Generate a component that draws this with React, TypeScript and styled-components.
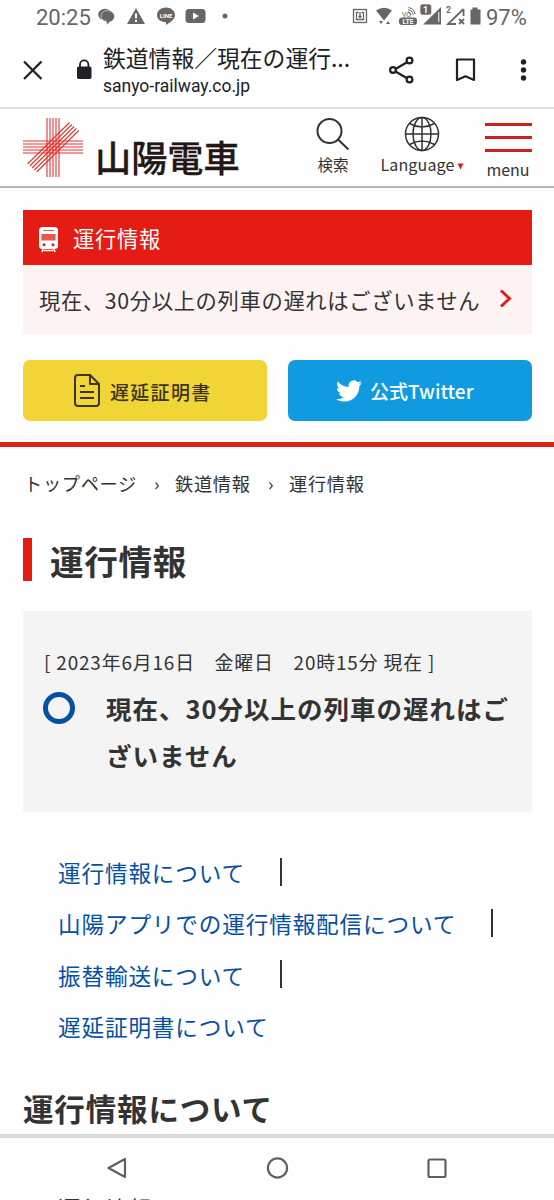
import React from "react";
import styled, { createGlobalStyle } from "styled-components";

const Global = createGlobalStyle`
  * { box-sizing: border-box; }
  body { margin: 0; background: #fefefe; overflow: hidden; }
`;
const jp = `"Noto Sans CJK JP", sans-serif`;

const Screen = styled.div`
  width: 554px; height: 1200px; overflow: hidden; display: flex; flex-direction: column;
  background: #fefefe; color: #333; font-family: ${jp}; letter-spacing: 1px; white-space: nowrap;
  svg { display: block; flex: none; overflow: visible; }
`;
const StatusBar = styled.div`
  height: 34px; flex: none; display: flex; align-items: center; padding-left: 36px;
  font-family: Roboto, sans-serif; color: #666; letter-spacing: 0;
`;
const StatusText = styled.span<{ $w: number }>`
  width: ${p => p.$w}px; font-size: 22px; line-height: 34px; padding-top: 1px;
`;
const BrowserBar = styled.div`
  height: 75px; flex: none; display: flex; align-items: flex-start; border-bottom: 2px solid #e0e0e0;
  color: #202124; letter-spacing: 0;
`;
const PageId = styled.div`width: 286px; margin-left: 11px;`;
const PageTitle = styled.div`font-size: 22.8px; line-height: 34px; margin-top: 7px; height: 33px;`;
const PageHost = styled.div`font: 17.5px/24px Roboto, sans-serif;`;

const Header = styled.header`
  height: 79px; flex: none; display: flex; align-items: flex-start; padding-left: 22px;
  border-bottom: 2px solid #b5b5b5;
`;
const Wordmark = styled.div`
  width: 204px; margin: 20px 0 0 11px; font-size: 36.2px; line-height: 54px; font-weight: 500;
  letter-spacing: 0; color: #231815; -webkit-text-stroke: 0.3px #231815;
`;
const Tool = styled.div<{ $w: number; $ml?: number; $top?: number }>`
  width: ${p => p.$w}px; margin-left: ${p => p.$ml ?? 0}px; padding-top: ${p => p.$top ?? 0}px;
  display: flex; flex-direction: column; align-items: center;
`;
const ToolLabel = styled.div<{ $size?: number; $ls?: number; $top?: number }>`
  font-size: ${p => p.$size ?? 16}px; letter-spacing: ${p => p.$ls ?? 0.15}px; line-height: 24px;
  margin-top: ${p => p.$top ?? 0}px; display: flex; align-items: center;
`;
const Burger = styled.div`
  width: 47px; height: 29px; display: flex; flex-direction: column; justify-content: space-between;
`;
const BurgerLine = styled.i`height: 3px; background: #d4201d;`;

const Notice = styled.section`
  margin: 22px 22px 0 23px; flex: none; height: 124px; background: #fdf3f2;
`;
const NoticeHead = styled.div`
  height: 55px; background: #e41c13; color: #fff; display: flex; align-items: center; gap: 15px;
  padding: 0 0 1px 16px; font-size: 21.3px; letter-spacing: 0.7px;
`;
const NoticeBody = styled.div`
  height: 69px; display: flex; align-items: center; justify-content: space-between;
  padding: 0 20px 1px 16px; font-size: 21.3px; letter-spacing: 0.65px;
`;
const Buttons = styled.div`
  display: grid; grid-template-columns: 1fr 1fr; gap: 21px; margin: 26px 22px 0 23px; flex: none;
`;
const Button = styled.div<{ $bg: string; $fg: string; $pad: number; $gap: number }>`
  height: 61px; border-radius: 7px; background: ${p => p.$bg}; color: ${p => p.$fg};
  display: flex; align-items: center; padding-left: ${p => p.$pad}px; gap: ${p => p.$gap}px;
  font-weight: 500; font-size: 19px;
`;
const ButtonText = styled.span<{ $ls: number; $drop?: number }>`
  letter-spacing: ${p => p.$ls}px; padding-top: ${p => p.$drop ?? 0}px;
`;
const RedRule = styled.div`height: 5px; flex: none; margin-top: 21px; background: #dd2018;`;
const Crumbs = styled.nav`
  display: flex; flex: none; height: 28px; margin: 22px 0 0 24px; font-size: 18.2px; line-height: 28px;
  letter-spacing: 0.7px;
`;
const Crumb = styled.span<{ $w: number }>`width: ${p => p.$w}px;`;
const Title = styled.h1`
  flex: none; display: flex; align-items: center; height: 43px; margin: 41px 0 0 23px;
  border-left: 9px solid #e41c13; padding: 1px 0 0 18px; font-size: 33.6px; font-weight: 700;
  letter-spacing: 0.7px;
`;
const Status = styled.section`
  flex: none; height: 201px; margin: 30px 22px 0 23px; background: #f4f4f4; padding: 37px 0 0 21px;
`;
const Stamp = styled.div`font-size: 18.9px; line-height: 28px; letter-spacing: 0.85px;`;
const StatusRow = styled.div`display: flex; margin-top: 8px;`;
const Ring = styled.div`
  width: 32px; height: 32px; border: 5px solid #0450a3; border-radius: 50%; margin: 8px 31px 0 -1px;
`;
const StatusMessage = styled.div`
  font-size: 25.5px; line-height: 47px; font-weight: 700; letter-spacing: 1px;
`;
const Links = styled.ul`list-style: none; flex: none; margin: 35px 0 0 58px; padding: 0;`;
const LinkRow = styled.li`
  display: flex; align-items: center; height: 51.3px; font-size: 22.6px; letter-spacing: 0.87px;
  color: #0450a3;
`;
const Divider = styled.i`width: 2px; height: 28px; margin: 0 0 2px 35px; background: #333;`;
const SubTitle = styled.h2`
  flex: none; margin: 33px 0 2px 23px; height: 47px; font-size: 30.5px; line-height: 47px; font-weight: 700;
  letter-spacing: 0.85px;
`;
const NavBar = styled.div`
  flex: none; height: 62px; border-top: 4px solid #dadada; background: #fefefe;
  display: flex; align-items: center; padding: 2px 0 0 106px; color: #606060;
`;
const CutText = styled.div`
  flex: none; padding-left: 58px; font-size: 22.6px; line-height: 26px; height: 26px;
`;

const Logo = () => (
  <svg width="62" height="62" viewBox="0 0 62 62" stroke="#df3733" strokeWidth="1.1" style={{ marginTop: 8 }}>
    {[0, 1, 2, 3, 4].map(i => (
      <g key={i}>
        <path d={`M${25 + i * 3} 1V60`} />
        <path d={`M1 ${24 + i * 3}H61`} />
        <path d={`M${5.5 + i * 2.3} ${47 + i * 2}L${47.5 + i * 2.3} ${5.5 + i * 2}`} />
      </g>
    ))}
  </svg>
);

const StatusIconsLeft = () => (
  <svg width="261" height="34" viewBox="92 0 261 34" fill="#666">
    <ellipse cx="105" cy="14.500" rx="6.800" ry="5.700" />
    <path d="M107 10.500c4.500 0 7.500 2.600 7.500 6 0 3-2.300 4.700-4.400 5.300l-3.600 3.200v-3.600c-3-.4-5.500-2.200-5.500-4.900 0-3.300 2.500-6 6-6z" stroke="#fefefe" strokeWidth=".5" />
    <path d="M136 8l9 16h-18z" /><path d="M136 13.500v5M136 20v2" stroke="#fff" strokeWidth="2" />
    <path d="M166 7.500c5 0 9 3.300 9 7.500 0 5-6 8-9 10v-2.700c-5-.2-9-3-9-7.300 0-4.200 4-7.500 9-7.500z" />
    <text x="166" y="17.500" fill="#fff" fontSize="6" fontWeight="700" fontFamily="Roboto, sans-serif" textAnchor="middle">LINE</text>
    <rect x="185.500" y="9" width="20" height="14" rx="3.500" /><path d="M193 12.500l6 3.500-6 3.500z" fill="#fff" />
    <circle cx="225" cy="16" r="2.500" />
  </svg>
);

const StatusIconsRight = () => (
  <svg width="133" height="34" viewBox="353 0 133 34" fill="#666" fontFamily="Roboto, sans-serif">
    <g fill="none" stroke="#666" strokeWidth="1.300">
      <rect x="353.500" y="9.500" width="13" height="13" />
      <path d="M358.500 12.500h-2v7h7v-7h-2M360 12v5.500M358.500 16l1.500 1.500 1.500-1.500" />
      <path d="M408 12a3 3 0 0 1 2.500 3M408 9.700a5.500 5.500 0 0 1 5 5M408.500 7.500a8 8 0 0 1 6.500 6.500" strokeWidth="1" />
      <path d="M463.500 9v7M463.500 9L448 24h8M459 19l5 5M464 19l-5 5" strokeWidth="1.800" />
    </g>
    <path d="M376 10.500q8-5.500 16 0l-8 10z" /><path d="M379 21h4l-2 3zM386 24h4l-2-3z" />
    <text x="402" y="16.500" fontSize="7" textLength="9">VO</text>
    <rect x="399" y="17.500" width="18" height="7.500" rx="3" />
    <text x="408" y="24" fill="#fff" fontSize="6.800" fontWeight="700" textAnchor="middle">LTE</text>
    <path d="M423 24.500L441 7v17.500z" /><path d="M438.800 12v10" stroke="#fff" strokeWidth="1" />
    <rect x="420" y="4" width="11.500" height="11" rx="2.500" stroke="#fefefe" strokeWidth=".6" />
    <text x="425.700" y="13" fill="#fff" fontSize="9" fontWeight="700" textAnchor="middle">1</text>
    <text x="446" y="12.500" fontSize="8.500" fontWeight="700">2</text>
    <path d="M472.500 7.500h5v2h3v15h-10v-15h2z" />
  </svg>
);

export default function App() {
  return (
    <Screen>
      <Global />
      <StatusBar>
        <StatusText $w={56}>20:25</StatusText>
        <StatusIconsLeft />
        <StatusIconsRight />
        <StatusText $w={44}>97%</StatusText>
      </StatusBar>
      <BrowserBar>
        <svg width="92" height="73" viewBox="0 34 92 73">
          <path d="M24 61.500l17.500 17.500M41.500 61.500L24 79" stroke="#202124" strokeWidth="2.300" />
          <rect x="77" y="66.500" width="14.500" height="12.500" rx="1.800" fill="#202124" />
          <path d="M80 67v-2.500a4.200 4.200 0 0 1 8.400 0V67" fill="none" stroke="#202124" strokeWidth="1.800" />
        </svg>
        <PageId>
          <PageTitle>鉄道情報／現在の運行...</PageTitle>
          <PageHost>sanyo-railway.co.jp</PageHost>
        </PageId>
        <svg width="165" height="73" viewBox="389 34 165 73" fill="none" stroke="#202124" strokeWidth="2.200">
          <path d="M395.500 69l12-7M395.500 71.500l12 7" />
          <circle cx="393" cy="70" r="2.900" /><circle cx="409.500" cy="60.500" r="2.900" /><circle cx="409.500" cy="79.500" r="2.900" />
          <path d="M457 59.500h17v20.500l-8.500-3.800-8.500 3.800z" strokeLinejoin="round" />
          <g fill="#202124" stroke="none"><circle cx="523.500" cy="62" r="2.700" /><circle cx="523.500" cy="70" r="2.700" /><circle cx="523.500" cy="78" r="2.700" /></g>
        </svg>
      </BrowserBar>

      <Header>
        <Logo />
        <Wordmark>山陽電車</Wordmark>
        <Tool $w={40} $ml={14} $top={9}>
          <svg width="34" height="34" viewBox="0 0 34 34" fill="none" stroke="#333" strokeWidth="2">
            <circle cx="13.500" cy="13" r="12" /><path d="M22 21.500l10.500 10" />
          </svg>
          <ToolLabel $size={15.500} $ls={0}>検索</ToolLabel>
        </Tool>
        <Tool $w={86} $ml={26} $top={7}>
          <svg width="36" height="36" viewBox="0 0 36 36" fill="none" stroke="#333" strokeWidth="1.500">
            <circle cx="18" cy="18" r="16.500" /><ellipse cx="18" cy="18" rx="9" ry="16.500" />
            <path d="M18 1v34M1 18h34M5.500 7.500q12.500 7 25 0M5.500 28.500q12.500-7 25 0" />
          </svg>
          <ToolLabel>Language
            <svg width="7" height="7" viewBox="0 0 7 7" style={{ marginTop: 5, marginLeft: 2 }}><path d="M.5 .5h6l-3 6z" fill="#d4201d" /></svg>
          </ToolLabel>
        </Tool>
        <Tool $w={48} $ml={19} $top={14}>
          <Burger><BurgerLine /><BurgerLine /><BurgerLine /></Burger>
          <ToolLabel $top={5} $ls={0}>menu</ToolLabel>
        </Tool>
      </Header>

      <Notice>
        <NoticeHead>
          <svg width="19" height="26" viewBox="0 0 19 26" style={{ marginTop: 6 }}>
            <path d="M5 20l-2 5M14 20l2 5M5 23.500h9" stroke="#fff" strokeWidth="1.700" />
            <rect width="19" height="22" rx="3.500" fill="#fff" />
            <path d="M4 3.500h11M3 7.500h13v5.500H3z" stroke="#e9584f" strokeWidth="1.200" fill="#e9584f" />
            <circle cx="5" cy="17.800" r="1.500" fill="#e41c13" /><circle cx="14" cy="17.800" r="1.500" fill="#e41c13" />
          </svg>
          運行情報
        </NoticeHead>
        <NoticeBody>
          現在、30分以上の列車の遅れはございません
          <svg width="13" height="20" viewBox="0 0 13 20" fill="none" stroke="#dd2018" strokeWidth="3"><path d="M2 1.500l8.500 8L2 17.500" /></svg>
        </NoticeBody>
      </Notice>

      <Buttons>
        <Button $bg="#f1d537" $fg="#3d341d" $pad={51} $gap={10}>
          <svg width="26" height="33" viewBox="0 0 26 33" fill="none" stroke="currentColor" strokeWidth="2" strokeLinejoin="round">
            <path d="M4 1h12l9 9v19a3 3 0 0 1-3 3H4a3 3 0 0 1-3-3V4a3 3 0 0 1 3-3zM16 1v9h9M6 12h5M6 18h14M6 24h14" />
          </svg>
          <ButtonText $ls={1.300} $drop={1}>遅延証明書</ButtonText>
        </Button>
        <Button $bg="#109be0" $fg="#fff" $pad={48} $gap={8}>
          <svg width="26" height="24" viewBox="0 2 24 20" fill="currentColor">
            <path d="M23.950 4.570a10 10 0 0 1-2.820.780 4.960 4.960 0 0 0 2.160-2.720c-.950.550-2 .950-3.130 1.180a4.920 4.920 0 0 0-8.380 4.480C7.690 8.090 4.070 6.130 1.640 3.160a4.820 4.820 0 0 0-.670 2.480c0 1.710.870 3.210 2.190 4.100a4.900 4.900 0 0 1-2.230-.620v.060a4.920 4.920 0 0 0 3.950 4.830 5 5 0 0 1-2.210.080 4.940 4.940 0 0 0 4.600 3.420A9.870 9.870 0 0 1 0 19.540a13.990 13.990 0 0 0 7.550 2.210c9.050 0 14-7.500 14-13.980 0-.210 0-.420-.020-.630a9.940 9.940 0 0 0 2.460-2.550z" />
          </svg>
          <ButtonText $ls={0.050}>公式Twitter</ButtonText>
        </Button>
      </Buttons>
      <RedRule />

      <Crumbs>
        <Crumb $w={130}>トップページ</Crumb><Crumb $w={21}>›</Crumb>
        <Crumb $w={93}>鉄道情報</Crumb><Crumb $w={21}>›</Crumb>
        <Crumb $w={80}>運行情報</Crumb>
      </Crumbs>
      <Title>運行情報</Title>

      <Status>
        <Stamp>[ 2023年6月16日　金曜日　20時15分 現在 ]</Stamp>
        <StatusRow>
          <Ring />
          <StatusMessage>現在、30分以上の列車の遅れはご<br />ざいません</StatusMessage>
        </StatusRow>
      </Status>

      <Links>
        <LinkRow>運行情報について<Divider /></LinkRow>
        <LinkRow>山陽アプリでの運行情報配信について<Divider /></LinkRow>
        <LinkRow>振替輸送について<Divider /></LinkRow>
        <LinkRow>遅延証明書について</LinkRow>
      </Links>
      <SubTitle>運行情報について</SubTitle>

      <NavBar>
        <svg width="350" height="30" viewBox="106 1153 350 30" fill="none" stroke="currentColor" strokeWidth="2.200" strokeLinejoin="round">
          <path d="M125 1159v18l-16.500-9z" /><circle cx="277.500" cy="1168" r="9.600" />
          <rect x="428.500" y="1159.500" width="17" height="17.500" rx="1.500" />
        </svg>
      </NavBar>
      <CutText>運行情報</CutText>
    </Screen>
  );
}
